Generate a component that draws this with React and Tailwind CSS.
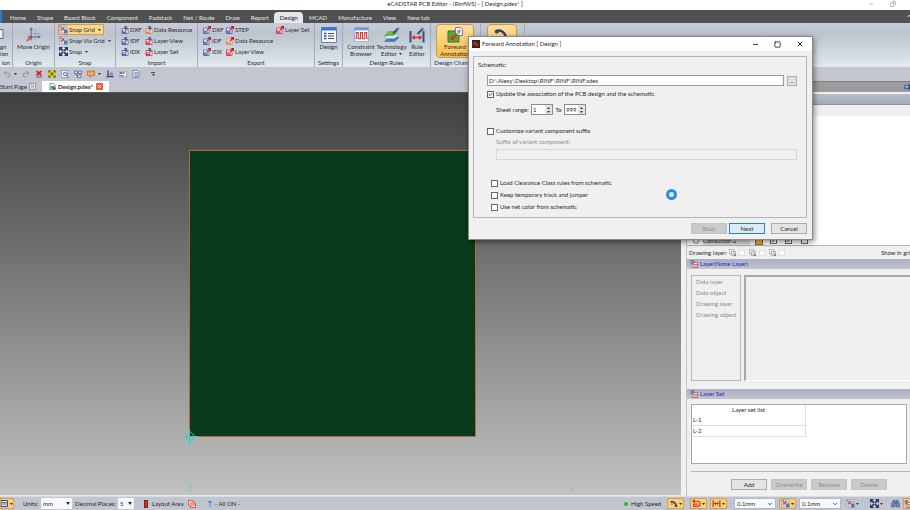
import clsx from "clsx";
import { Check, ChevronDown, ChevronUp, Minus, Square, X, Copy } from "lucide-react";

const menuTabs = [
  "Home",
  "Shape",
  "Board Block",
  "Component",
  "Padstack",
  "Net / Route",
  "Draw",
  "Report",
  "Design",
  "MCAD",
  "Manufacture",
  "View",
  "New tab",
];

const importColumns = [
  [
    { label: "DXF", color: "#6a58b0" },
    { label: "IDF", color: "#4a62ad" },
    { label: "IDX", color: "#4a62ad" },
  ],
  [
    { label: "Data Resource", color: "#e08a3c" },
    { label: "Layer View", color: "#d8324a" },
    { label: "Layer Set", color: "#d8324a" },
  ],
];

const exportColumns = [
  [
    { label: "DXF", color: "#6a58b0" },
    { label: "IDF", color: "#4a62ad" },
    { label: "IDX", color: "#4a62ad" },
  ],
  [
    { label: "STEP", color: "#5a4fb0" },
    { label: "Data Resource", color: "#e08a3c" },
    { label: "Layer View", color: "#d8324a" },
  ],
  [{ label: "Layer Set", color: "#d8324a" }],
];

const layerItems = ["Data layer", "Data object", "Drawing layer", "Drawing object"];

/* ---------- icons ---------- */

const Caret = ({ className }) => (
  <svg viewBox="0 0 6 4" className={clsx("h-[2px] w-[3px] shrink-0", className)}>
    <path d="M0 0h6L3 4z" fill="#333" />
  </svg>
);

const ImportIcon = ({ color }) => (
  <svg viewBox="0 0 16 16" className="size-[8px] shrink-0">
    <path d="M2 5h12v10H2z" fill="#eef0f8" stroke={color} strokeWidth="1.6" />
    <path d="M2 9h8v6H2z" fill={color} />
    <path d="M4 11h4" stroke="#fff" strokeWidth="1.2" />
    <path d="M7 0h5v4h3l-5 5-5-5h2z" fill="#59637c" />
    <path d="M10 11h3v3h-3z" fill="#c8d6f0" />
  </svg>
);

const ExportIcon = ({ color }) => (
  <svg viewBox="0 0 16 16" className="size-[8px] shrink-0">
    <path d="M1 4h11v11H1z" fill="#eef0f8" stroke={color} strokeWidth="1.6" />
    <path d="M1 9h8v6H1z" fill={color} />
    <path d="M3 12h4" stroke="#fff" strokeWidth="1.2" />
    <path d="M8 8l5-5" stroke="#c4242e" strokeWidth="2.6" />
    <path d="M9 0h7v7z" fill="#b3202c" />
  </svg>
);

const SnapGridIcon = () => (
  <svg viewBox="0 0 16 16" className="size-[9px] shrink-0">
    <path d="M1 1h13v13H1zM1 5h13M1 10h13M5 1v13M10 1v13" fill="#f0f1f6" stroke="#8a93a8" strokeWidth="1" />
    <path d="M2 2l6 6M8 8V3M8 8H3" stroke="#c8505a" strokeWidth="1.8" fill="none" />
    <path d="M9 8h6v7H9z" fill="#5c76ac" />
  </svg>
);

const SnapIcon = () => (
  <svg viewBox="0 0 16 16" className="size-[9px] shrink-0">
    <path d="M0 0h7L0 7zM16 0v7L9 0zM0 16V9l7 7zM16 16H9l7-7z" fill="#243a5c" />
    <path d="M3 3l4 4M13 3L9 7M3 13l4-4M13 13L9 9" stroke="#243a5c" strokeWidth="3" />
    <circle cx="8" cy="8" r="2" fill="#7ba6dc" />
  </svg>
);

const OriginIcon = () => (
  <svg viewBox="0 0 32 32" className="size-[15px]">
    <path d="M11 3v25M4 21h24" stroke="#5c7596" strokeWidth="2.4" />
    <path d="M11 0l-4 6h8zM32 21l-6-4v8z" fill="#5c7596" />
    <path d="M20 5v22M8 14h22" stroke="#8a9cb8" strokeWidth="1.6" />
    <path d="M2 30l9-9" stroke="#d8372f" strokeWidth="3" />
    <path d="M13 19v7l-7-7z" fill="#d8372f" />
  </svg>
);

const DesignIcon = () => (
  <svg viewBox="0 0 32 32" className="size-[16px]">
    <path d="M1 1h30v30H1z" fill="#f6f9fd" stroke="#5b82c4" strokeWidth="2" />
    <path d="M1 1h30v6H1z" fill="#3e74c8" />
    <path d="M6 13h5M6 18h5M6 23h5" stroke="#2f5597" strokeWidth="3" />
    <path d="M14 13h12M14 18h12M14 23h12" stroke="#444f66" strokeWidth="2" />
  </svg>
);

const ConstraintIcon = () => (
  <svg viewBox="0 0 32 32" className="size-[15px]">
    <path d="M1 1h30v30H1z" fill="#f3f5fb" stroke="#8ca4cf" strokeWidth="1.5" />
    <path d="M1 1h30v6H1z" fill="#6f97da" />
    <path
      d="M2 24h3V12h4v13h5V12h4v13h5V12h4v12h4"
      fill="none"
      stroke="#e0302c"
      strokeWidth="2.2"
    />
  </svg>
);

const TechnologyIcon = () => (
  <svg viewBox="0 0 32 32" className="size-[16px]">
    <path d="M1 29l9-8h20l-9 8z" fill="#3e7fc6" stroke="#2a63a4" />
    <path d="M1 23l9-8h20l-9 8z" fill="#e4eef5" stroke="#7ba0c4" />
    <path d="M1 17l9-8h18l-8 8z" fill="#6cba3c" stroke="#4a9630" />
    <path d="M18 13L29 2" stroke="#33588f" strokeWidth="4" />
    <path d="M26 1l5 4" stroke="#6f97c8" strokeWidth="3" />
  </svg>
);

const RuleIcon = () => (
  <svg viewBox="0 0 32 32" className="size-[16px]">
    <path d="M3 8v23M29 8v23" stroke="#2e4f8e" strokeWidth="4" />
    <path d="M8 21h16" stroke="#e0302c" strokeWidth="3" />
    <path d="M5 21l7-5v10zM27 21l-7-5v10z" fill="#e0302c" />
    <path d="M17 14L28 3" stroke="#33588f" strokeWidth="4" />
    <path d="M25 1l5 4" stroke="#6f97c8" strokeWidth="3" />
  </svg>
);

const ForwardIcon = () => (
  <svg viewBox="0 0 32 32" className="size-[16px]">
    <path d="M2 8h22v22H2z" fill="#4fae32" stroke="#2c7a22" strokeWidth="2" />
    <path d="M17 1h10l4 4v12H17z" fill="#eef1f6" stroke="#56617a" strokeWidth="1.5" />
    <path d="M20 8h8M20 12h5M24 5v9" stroke="#56617a" strokeWidth="1.4" />
    <path d="M20 14l-9 9" stroke="#d9302c" strokeWidth="4" />
    <path d="M7 26v-9l9 9z" fill="#d9302c" />
  </svg>
);

const CurveIcon = () => (
  <svg viewBox="0 0 32 32" className="size-[16px]">
    <path d="M4 7C14 1 24 10 26 26" fill="none" stroke="#2f4468" strokeWidth="5" strokeLinecap="round" />
    <path d="M20 24h12l-5 7z" fill="#2f4468" />
    <circle cx="6" cy="7" r="4" fill="#2f4468" />
  </svg>
);

const LayerIcon = () => (
  <svg viewBox="0 0 16 16" className="size-[8px] shrink-0">
    <path d="M3 5h12v10H5z" fill="#f4f0f4" stroke="#c0404c" strokeWidth="1.4" />
    <path d="M5 9h10M6 12h9" stroke="#c0404c" strokeWidth="1.4" />
    <circle cx="5" cy="4" r="4" fill="#5b7390" />
    <path d="M3 4h4" stroke="#dfe6ee" strokeWidth="1.2" />
  </svg>
);

const DocIcon = () => (
  <svg viewBox="0 0 16 16" className="size-[7px] shrink-0">
    <path d="M2 1h8l4 4v10H2z" fill="#fff" stroke="#3c6a48" strokeWidth="1.5" />
    <path d="M4 7h8v6H4z" fill="#3c9650" />
    <path d="M9 10h6v5H9z" fill="#3a5a96" />
  </svg>
);

const GrabIcon = () => (
  <svg viewBox="0 0 16 16" className="size-[8px] shrink-0">
    <path d="M1 1h9v9H1z" fill="#f2f2f2" stroke="#8f8f8f" strokeWidth="1.2" />
    <path d="M5 5h8v8H5z" fill="#e2e2e2" stroke="#8f8f8f" strokeWidth="1.2" />
    <path d="M9 8l6 5-3 1-1 2z" fill="#7a7a7a" />
  </svg>
);

const ShapeIcon = () => (
  <svg viewBox="0 0 16 16" className="size-[8px] shrink-0">
    <path d="M1 1h10v5h4v9H5v-4H1z" fill="#fbdcd6" stroke="#d63a30" strokeWidth="1.6" />
    <path d="M4 6h7M5 10h10" stroke="#d63a30" strokeWidth="1.6" />
  </svg>
);

const TrackIcon = () => (
  <svg viewBox="0 0 16 16" className="size-[8px] shrink-0">
    <path d="M1 4c6-2 11 2 12 10" fill="none" stroke="#3b3a35" strokeWidth="3.4" />
    <path d="M9 12h6M2 8h4" stroke="#3b3a35" strokeWidth="1.6" />
  </svg>
);

const ReturnIcon = () => (
  <svg viewBox="0 0 16 16" className="size-[9px] shrink-0">
    <path d="M3 4h7a4 4 0 010 9H3V9h7" fill="none" stroke="#cf3424" strokeWidth="2" />
    <path d="M0 4l5-4v8z" fill="#cf3424" />
  </svg>
);

const GapIcon = () => (
  <svg viewBox="0 0 16 16" className="size-[9px] shrink-0">
    <path d="M2 2v12M14 2v12" stroke="#cf3424" strokeWidth="2.2" />
    <path d="M3 8h10" stroke="#cf3424" strokeWidth="1.6" />
    <path d="M4 8l3-3v6zM12 8L9 5v6z" fill="#cf3424" />
  </svg>
);

const BinocularsIcon = () => (
  <svg viewBox="0 0 16 16" className="size-[9px] shrink-0">
    <path d="M4 2h3v12H1v-5zM12 2H9v12h6v-5z" fill="#6c86b4" stroke="#3a5484" strokeWidth="1" />
    <path d="M6 7h4" stroke="#3a5484" strokeWidth="2" />
  </svg>
);

/* ---------- ribbon ---------- */

const RibbonGroup = ({ label, className, children }) => (
  <section
    className={clsx(
      "flex shrink-0 flex-col overflow-hidden border-r border-[#a3abb9] pt-px",
      className,
    )}
  >
    <div className="flex flex-1">{children}</div>
    {label && <h2 className="text-center leading-[9px]">{label}</h2>}
  </section>
);

const SmallButton = ({ icon, label, caret, active }) => (
  <button
    className={clsx(
      "flex h-[11px] items-center gap-px border pr-[2px]",
      active ? "border-[#c9a04c] bg-[#fbd68a]" : "border-transparent",
    )}
  >
    {icon}
    {label}
    {caret && <Caret className="ml-[2px]" />}
  </button>
);

const LargeButton = ({ icon, lines = [], label, caret, className }) => (
  <button aria-label={label} className={clsx("flex flex-col items-center pt-[2px]", className)}>
    <span className="flex h-[17px] items-center">{icon}</span>
    {lines.map((line, index) => (
      <span key={line} className="flex items-center gap-[2px] leading-[7px]">
        {line}
        {caret && index === lines.length - 1 && <Caret />}
      </span>
    ))}
  </button>
);

const Ribbon = () => (
  <div className="flex h-[44px] shrink-0 overflow-hidden bg-linear-to-b from-[#c9ccd7] via-[#bcc4cf] via-25% to-[#e0eaee]">
    <RibbonGroup label="ion" className="w-[13px]">
      <div className="flex flex-col pt-[4px]">
        <svg viewBox="0 0 10 26" className="h-[13px] w-[5px]">
          <path d="M0 3h6v18H0" fill="#eef3fb" stroke="#4a6ea8" strokeWidth="2" />
        </svg>
        <span className="pt-[2px] leading-[7px]">gn</span>
        <span className="leading-[7px]">ion</span>
      </div>
    </RibbonGroup>
    <RibbonGroup label="Origin" className="w-[42px]">
      <LargeButton icon={<OriginIcon />} lines={["Move Origin"]} className="w-full" />
    </RibbonGroup>
    <RibbonGroup label="Snap" className="w-[61px]">
      <div className="flex flex-col items-start pl-[3px]">
        <SmallButton icon={<SnapGridIcon />} label="Snap Grid" caret active />
        <SmallButton icon={<SnapGridIcon />} label="Snap Via Grid" caret />
        <SmallButton icon={<SnapIcon />} label="Snap" caret />
      </div>
    </RibbonGroup>
    <RibbonGroup label="Import" className="w-[82px]">
      {importColumns.map((column, index) => (
        <div key={index} className={clsx("flex flex-col items-start", index === 0 ? "ml-[4px] w-[24px]" : "w-[50px]")}>
          {column.map((item) => (
            <SmallButton key={item.label} icon={<ImportIcon color={item.color} />} label={item.label} />
          ))}
        </div>
      ))}
    </RibbonGroup>
    <RibbonGroup label="Export" className="w-[117px]">
      {exportColumns.map((column, index) => (
        <div
          key={index}
          className={clsx(
            "flex flex-col items-start",
            index === 0 && "ml-[4px] w-[23px]",
            index === 1 && "w-[50px]",
          )}
        >
          {column.map((item) => (
            <SmallButton key={item.label} icon={<ExportIcon color={item.color} />} label={item.label} />
          ))}
        </div>
      ))}
    </RibbonGroup>
    <RibbonGroup label="Settings" className="w-[28px]">
      <LargeButton icon={<DesignIcon />} lines={["Design"]} className="w-full" />
    </RibbonGroup>
    <RibbonGroup label="Design Rules" className="w-[88px]">
      <LargeButton icon={<ConstraintIcon />} lines={["Constraint", "Browser"]} className="ml-[3px] w-[30px]" />
      <LargeButton icon={<TechnologyIcon />} lines={["Technology", "Editor"]} caret className="w-[31px]" />
      <LargeButton icon={<RuleIcon />} lines={["Rule", "Editor"]} className="w-[20px]" />
    </RibbonGroup>
    <RibbonGroup label="Design Changes" className="w-[50px]">
      <LargeButton
        icon={<ForwardIcon />}
        lines={["Forward", "Annotation"]}
        className="ml-[5px] h-[34px] w-[38px] rounded-sm border border-[#d09a3a] bg-linear-to-b from-[#fddf9c] to-[#fbbf4c]"
      />
    </RibbonGroup>
    <RibbonGroup className="w-[44px]">
      <LargeButton
        icon={<CurveIcon />}
        label="Connect"
        className="ml-[6px] h-[34px] w-[30px] rounded-sm border border-[#d09a3a] bg-linear-to-b from-[#fddf9c] to-[#fbbf4c]"
      />
    </RibbonGroup>
  </div>
);

const quickIcons = [
  {
    name: "Undo",
    art: <path d="M2 6h8a4 4 0 010 8H7M6 2L2 6l4 4" fill="none" stroke="#8b91a0" strokeWidth="2" />,
    caret: true,
  },
  {
    name: "Redo",
    art: <path d="M14 6H6a4 4 0 000 8h3M10 2l4 4-4 4" fill="none" stroke="#8b91a0" strokeWidth="2" />,
  },
  {
    name: "Delete",
    art: (
      <>
        <path d="M3 2l10 9M13 2L3 11" stroke="#e0251f" strokeWidth="3.4" />
        <path d="M2 14h12" stroke="#59627a" strokeWidth="2" />
      </>
    ),
  },
  {
    name: "Fit",
    art: (
      <>
        <path d="M0 0h16v16H0z" fill="#e8c53a" />
        <path d="M1 1h5L1 6zM15 1v5l-5-5zM1 15v-5l5 5zM15 15h-5l5-5z" fill="#253c26" />
        <path d="M5 5h6v6H5z" fill="#3c8a34" />
      </>
    ),
  },
  {
    name: "Zoom area",
    art: (
      <>
        <path d="M1 1h12v14H1z" fill="#f5f8fc" stroke="#7890b4" strokeWidth="1.4" />
        <circle cx="8" cy="8" r="3.5" fill="#cfe3f6" stroke="#4d6c9c" strokeWidth="1.6" />
        <path d="M11 11l4 4" stroke="#4d6c9c" strokeWidth="2" />
      </>
    ),
  },
  {
    name: "Search",
    art: (
      <>
        <path d="M1 2h6v5H1zM9 2h6v5H9zM7 10h7v5H7z" fill="#e5ebf6" stroke="#43609a" strokeWidth="1.5" />
        <path d="M3 8l4 5M12 7v3" stroke="#b43a44" strokeWidth="1.8" />
      </>
    ),
  },
  {
    name: "Comment",
    art: <path d="M1 2h14v9H9l-3 4v-4H1z" fill="#f3a94e" stroke="#b86c28" strokeWidth="1.6" />,
    caret: true,
  },
  {
    name: "Axis",
    art: (
      <>
        <path d="M4 1v12h11" fill="none" stroke="#27408a" strokeWidth="2.6" />
        <path d="M8 5h6v5H8z" fill="#6c8ed0" />
        <path d="M1 15l4-4" stroke="#d22f2c" strokeWidth="2.6" />
      </>
    ),
  },
  {
    name: "Grid",
    art: (
      <>
        <path d="M1 3h14v11H1z" fill="#f2f5fa" stroke="#8190ac" strokeWidth="1.2" />
        <path d="M2 4h4v4H2z" fill="#dd4a44" />
        <path d="M7 4h4v4H7z" fill="#4b9a52" />
        <path d="M2 10h8v3H2z" fill="#5f8bd0" />
      </>
    ),
  },
  {
    name: "Report",
    art: (
      <>
        <path d="M2 1h9l3 3v11H2z" fill="#eef3fa" stroke="#5674a8" strokeWidth="1.5" />
        <path d="M6 5h5v8H6z" fill="#b9cce8" stroke="#3e5c92" />
      </>
    ),
  },
];

const QuickBar = () => (
  <div className="flex h-[14px] shrink-0 items-center gap-[5px] bg-[#c2c6d1] pl-[3px]">
    {quickIcons.map((item) => (
      <button key={item.name} aria-label={item.name} className="flex items-center gap-[3px]">
        <svg viewBox="0 0 16 16" className="size-[8px]">
          {item.art}
        </svg>
        {item.caret && <Caret />}
      </button>
    ))}
    <button aria-label="Customize" className="ml-[6px] flex flex-col items-center gap-px">
      <span className="h-px w-[4px] bg-[#444]" />
      <Caret />
    </button>
  </div>
);

/* ---------- form parts ---------- */

const CheckBox = ({ id, label, checked, className }) => (
  <div className={clsx("flex items-center gap-[2px]", className)}>
    <span className="relative flex">
      <input
        id={id}
        type="checkbox"
        defaultChecked={checked}
        aria-label={label ? undefined : id}
        className="peer size-[7px] appearance-none border border-[#666] bg-white"
      />
      <Check
        strokeWidth={4}
        className="pointer-events-none absolute inset-px hidden size-[5px] text-[#222] peer-checked:block"
      />
    </span>
    {label && <label htmlFor={id}>{label}</label>}
  </div>
);

const Spin = ({ id, value }) => (
  <span className="flex h-[11px] w-[22px] border border-[#8c8c8c] bg-white">
    <input
      id={id}
      aria-label={id}
      defaultValue={value}
      className="w-[13px] min-w-0 pl-px text-[#222] outline-none"
    />
    <span className="flex flex-1 flex-col items-center justify-center gap-[2px] bg-[#e2e2e2]">
      <button aria-label="Up">
        <Caret className="block rotate-180" />
      </button>
      <button aria-label="Down">
        <Caret className="block" />
      </button>
    </span>
  </span>
);

const PushButton = ({ label, disabled, primary }) => (
  <button
    disabled={disabled}
    className={clsx(
      "h-[11px] w-[36px] border leading-[9px]",
      primary && "border-[#2f7fc8] bg-[#dcebf8]",
      disabled && "border-[#c4c4c4] bg-[#cacaca] text-[#8e8e8e]",
      !primary && !disabled && "border-[#adadad] bg-[#e4e4e4]",
    )}
  >
    {label}
  </button>
);

const DropDown = ({ label, value, className, chevron }) => (
  <span className={clsx("relative flex h-[11px] items-center bg-[#f7f8fa]", className)}>
    <select aria-label={label} className="w-full appearance-none pl-[2px] outline-none">
      <option>{value}</option>
    </select>
    {chevron ? (
      <ChevronDown className="pointer-events-none absolute right-[2px] size-[6px]" strokeWidth={3} />
    ) : (
      <svg viewBox="0 0 6 5" className="pointer-events-none absolute right-[2px] h-[3px] w-[4px]">
        <path d="M0 0h6L3 5z" fill="#222" />
      </svg>
    )}
  </span>
);

/* ---------- dialog ---------- */

const ForwardAnnotationDialog = () => (
  <div
    role="dialog"
    aria-labelledby="dialog-title"
    className="absolute top-[36px] right-[97px] flex w-[345px] flex-col border border-[#8a8a8a] bg-[#f0f0f0] shadow-[1px_2px_6px_rgba(0,0,0,0.5)]"
  >
    <div className="flex h-[14px] items-center bg-white pr-[8px] pl-[3px]">
      <svg viewBox="0 0 16 16" className="mr-[2px] size-[8px]">
        <path d="M0 0h16v16H0z" fill="#4a1d1c" />
        <path d="M3 11V5h5v6h5M3 8h10" fill="none" stroke="#b8503f" strokeWidth="1.5" />
      </svg>
      <h1 id="dialog-title" className="flex-1">
        Forward Annotation [ Design ]
      </h1>
      <div className="flex items-center gap-[15px]">
        <button aria-label="Minimize">
          <Minus className="size-[7px]" strokeWidth={3} />
        </button>
        <button aria-label="Maximize">
          <Square className="size-[7px]" strokeWidth={3} />
        </button>
        <button aria-label="Close">
          <X className="size-[8px]" strokeWidth={3} />
        </button>
      </div>
    </div>

    <div className="mt-[5px] mr-[5px] ml-[4px] flex h-[162px] flex-col border border-[#b4b4b4] pr-[9px] pl-[4px]">
      <label htmlFor="schematic" className="mt-[4px] leading-[8px]">
        Schematic:
      </label>
      <div className="mt-[6px] ml-[9px] flex items-center gap-[3px]">
        <input
          id="schematic"
          defaultValue="D:\Alexy\Desktop\RINF\RINF\RINF.sdes"
          className="h-[11px] min-w-0 flex-1 border border-[#9a9a9a] bg-white pl-px outline-none"
        />
        <button aria-label="Browse" className="h-[10px] w-[10px] border border-[#adadad] bg-[#e1e1e1] leading-[6px]">
          ...
        </button>
      </div>
      <CheckBox
        id="update"
        label="Update the association of the PCB design and the schematic"
        checked
        className="mt-[4px] ml-[9px] h-[8px]"
      />
      <div className="mt-[6px] ml-[18px] flex items-center">
        <label htmlFor="Sheet from" className="w-[35px]">
          Sheet range:
        </label>
        <Spin id="Sheet from" value="1" />
        <label htmlFor="Sheet to" className="w-[11px] text-center">
          To
        </label>
        <Spin id="Sheet to" value="999" />
      </div>
      <CheckBox
        id="customize"
        label="Customize variant component suffix"
        className="mt-[12px] ml-[9px] h-[8px]"
      />
      <label htmlFor="suffix" className="mt-[3px] ml-[18px] leading-[8px] text-[#8c8c8c]">
        Suffix of variant component:
      </label>
      <input id="suffix" disabled className="mt-[3px] ml-[18px] h-[11px] border border-[#d6d6d6] bg-[#f0f0f0]" />
      <div className="mt-[19px] ml-[13px] flex flex-col gap-[4px]">
        <CheckBox id="load" label="Load Clearance Class rules from schematic" className="h-[8px]" />
        <CheckBox id="keep" label="Keep temporary track and jumper" className="h-[8px]" />
        <CheckBox id="netcolor" label="Use net color from schematic" className="h-[8px]" />
      </div>
    </div>

    <div className="flex justify-end gap-[2px] py-[5px] pr-[5px]">
      <PushButton label="Back" disabled />
      <PushButton label="Next" primary />
      <span className="ml-[4px] flex">
        <PushButton label="Cancel" />
      </span>
    </div>

    <span className="absolute top-[152px] left-[197px] size-[11px] rounded-full border-[3px] border-[#2f8be0] bg-[#d8ebfb]" />
  </div>
);

/* ---------- work area ---------- */

const Canvas = () => (
  <div className="relative min-h-0 flex-1 overflow-hidden border-b border-[#e8e8e8] bg-linear-to-b from-[#404040] to-[#c2c2c2]">
    <svg className="absolute inset-0 size-full">
      <rect x="189.5" y="57.5" width="286" height="286" fill="#093a1b" stroke="#b0683c" />
      <path d="M182 343.5h16M189.5 336v17M185 343.5l5-5 5 5-5 5z" fill="none" stroke="#3fc8c8" />
      <path d="M190 391v8M188 392h4M572 393v6M570 396h4" stroke="#63c8c8" opacity="0.7" />
    </svg>
  </div>
);

const PanelHeader = ({ label }) => (
  <div className="flex h-[10px] shrink-0 items-center gap-[2px] bg-linear-to-b from-[#a9b0be] to-[#c0c5cf] pl-[3px] text-[#1c1cd0]">
    <LayerIcon />
    <h2>{label}</h2>
  </div>
);

const SidePanel = () => (
  <aside className="flex w-[229px] shrink-0 flex-col bg-[#f0f0f0]">
    <div className="flex h-[11px] shrink-0 items-center justify-end border-t border-[#808080] bg-[#9c9c9c]">
      <svg viewBox="0 0 12 12" className="h-[6px] w-[6px]">
        <path d="M1 2h4v8H1zM7 1h5v10H7z" fill="#2746a8" />
        <path d="M3 4h6v3H3z" fill="#bcd0f2" />
      </svg>
    </div>
    <div className="mt-[2px] ml-[5px] flex min-h-0 flex-1 flex-col overflow-hidden border-l border-[#c4c4c4] pb-px">
      <div className="h-[11px] shrink-0 border-b border-[#8f959f] bg-linear-to-b from-[#b9bec9] to-[#a4abb8]" />
      <div className="mt-[11px] flex h-[130px] shrink-0 flex-col justify-end border-b border-[#b5b5b5] bg-white">
        <div className="flex h-[9px] items-center">
          <span className="ml-[6px] size-[6px] rounded-full border border-[#888]" />
          <span className="ml-[4px] w-[47px] bg-[#dcdcdc] leading-[8px]">Conductor-2</span>
          <span className="ml-[5px] size-[8px] border border-[#8a6a2a] bg-[#f0b440]" />
          <CheckBox id="conductor-visible" checked className="ml-[7px]" />
          <CheckBox id="conductor-select" checked className="ml-[8px]" />
          <CheckBox id="conductor-lock" className="ml-[9px]" />
        </div>
      </div>
      <div className="flex h-[13px] shrink-0 items-center gap-[4px] pl-[2px] whitespace-nowrap">
        <span className="w-[36px]">Drawing layer:</span>
        {["grab", "show", "edit"].map((name) => (
          <span key={name} className="flex items-center gap-[2px]">
            <GrabIcon />
            <input
              type="checkbox"
              aria-label={name}
              className="size-[6px] appearance-none border border-[#dedede] bg-white"
            />
          </span>
        ))}
        <span className="ml-auto">Show in gri</span>
      </div>
      <PanelHeader label="Layer(None Layer)" />
      <div className="mt-[6px] flex h-[106px] shrink-0 gap-[3px] pl-[4px]">
        <ul className="w-[50px] border border-[#b8b8b8] pl-[4px] leading-[11px] text-[#8a8a8a]">
          {layerItems.map((item) => (
            <li key={item}>{item}</li>
          ))}
        </ul>
        <div className="flex-1 border-t-2 border-b border-l-2 border-t-[#a8a8a8] border-b-white border-l-[#a8a8a8]" />
      </div>
      <div className="mt-[8px] flex flex-col">
        <PanelHeader label="Layer Set" />
      </div>
      <div className="mt-[5px] mr-[3px] ml-[4px] h-[60px] shrink-0 border border-[#a8a8a8] bg-white">
        <table className="w-[114px] border-collapse leading-[10px]">
          <thead>
            <tr>
              <th className="border-r border-[#dedede] p-0 font-normal">Layer set list</th>
            </tr>
          </thead>
          <tbody>
            <tr>
              <td className="border-r border-b border-[#dedede] py-0 pr-0 pl-px">L-1</td>
            </tr>
            <tr>
              <td className="border-r border-b border-[#dedede] py-0 pr-0 pl-px">L-2</td>
            </tr>
          </tbody>
        </table>
      </div>
      <div className="mt-[7px] ml-[4px] flex justify-end gap-[4px] border-t border-[#b8b8b8] pt-[7px] pr-[23px]">
        <PushButton label="Add" />
        <PushButton label="Overwrite" disabled />
        <PushButton label="Rename" disabled />
        <PushButton label="Delete" disabled />
      </div>
    </div>
  </aside>
);

const ToolToggle = ({ label, active, children }) => (
  <button
    aria-label={label}
    className={clsx(
      "flex h-[11px] w-[17px] shrink-0 items-center justify-center gap-px border",
      active ? "border-[#d3a24a] bg-[#fbcf78]" : "border-transparent",
    )}
  >
    {children}
    <Caret />
  </button>
);

const StatusBar = () => (
  <footer className="flex h-[14px] shrink-0 items-center overflow-hidden border-t border-[#d8dbe3] bg-[#c0c5d0] whitespace-nowrap">
    <button aria-label="Console" className="flex h-[11px] w-[14px] items-center gap-[2px] border border-[#d3a24a] bg-[#fbcf78]">
      <svg viewBox="0 0 14 14" className="size-[7px]">
        <path d="M0 1h13v12H0z" fill="#dfe8f5" stroke="#2f4a7e" strokeWidth="2" />
        <path d="M2 5h9M2 8h9" stroke="#2f4a7e" strokeWidth="1.5" />
      </svg>
      <Caret />
    </button>
    <span className="ml-[9px] w-[18px]">Units:</span>
    <DropDown label="Units" value="mm" className="w-[31px]" />
    <span className="ml-[3px] w-[43px]">Decimal Places:</span>
    <DropDown label="Decimal Places" value="5" className="w-[16px]" />
    <span className="ml-[10px] h-[8px] w-[4px] border border-[#7c2018] bg-[#d83428]" />
    <span className="ml-[4px] w-[36px]">Layout Area</span>
    <ShapeIcon />
    <svg viewBox="0 0 12 16" className="ml-[11px] h-[8px] w-[6px]">
      <path d="M1 2h10L7 7v8H5V7z" fill="#4a8fdc" />
    </svg>
    <span className="ml-[2px]">- All ON -</span>

    <span className="ml-auto size-[4px] rounded-full bg-[#25b52c]" />
    <span className="ml-[3px] w-[36px]">High Speed</span>
    <div className="flex items-center gap-[3px]">
      <ToolToggle label="Track" active>
        <TrackIcon />
      </ToolToggle>
      <span className="ml-[3px] flex gap-[3px]">
        <ToolToggle label="Return" active>
          <ReturnIcon />
        </ToolToggle>
        <ToolToggle label="Gap" active>
          <GapIcon />
        </ToolToggle>
      </span>
      <DropDown label="Grid" value="0.1mm" chevron className="ml-[4px] w-[42px] border border-[#b4b8c2]" />
      <ToolToggle label="Snap grid" active>
        <SnapGridIcon />
      </ToolToggle>
      <DropDown label="Via grid" value="0.1mm" chevron className="w-[42px] border border-[#b4b8c2]" />
      <ToolToggle label="Snap via grid">
        <SnapGridIcon />
      </ToolToggle>
      <span className="ml-[4px] flex">
        <ToolToggle label="Snap">
          <SnapIcon />
        </ToolToggle>
      </span>
    </div>
    <button aria-label="Find" className="ml-[6px]">
      <BinocularsIcon />
    </button>
    <button aria-label="Layers" className="ml-[3px] h-[11px] w-[7px] overflow-hidden border border-r-0 border-[#d3a24a] bg-[#fbcf78]">
      <LayerIcon />
    </button>
  </footer>
);

const App = () => {
  return (
    <div className="relative flex h-screen flex-col overflow-hidden bg-[#c2c6d1] font-[Lato,'Open_Sans',sans-serif] text-[6px] leading-[8px] whitespace-nowrap text-[#2a2a2a]">
      <header className="relative flex h-[10px] shrink-0 items-start justify-center bg-white">
        <h1 className="leading-[7px]">eCADSTAR PCB Editor - (RinfWS) - [ Design.pdes* ]</h1>
        <div className="absolute top-px right-[14px] flex gap-[16px] text-[#777]">
          <button aria-label="Minimize window">
            <Minus className="size-[6px]" strokeWidth={2} />
          </button>
          <button aria-label="Restore window">
            <Copy className="size-[6px] -scale-x-100" strokeWidth={2} />
          </button>
        </div>
      </header>

      <nav className="flex h-[13px] shrink-0 items-end bg-[#515151] text-[#e6e6e6]">
        <span className="mr-[2px] h-full w-[2px] bg-[#2a7bd0]" />
        {menuTabs.map((tab) => (
          <button
            key={tab}
            className={clsx(
              "h-[11px] shrink-0 pr-[5px] pl-[6px]",
              tab === "Design" && "rounded-t-sm bg-[#e4e7ed] text-[#222]",
            )}
          >
            {tab}
          </button>
        ))}
        <ChevronUp className="mr-[-2px] mb-[4px] ml-auto size-[6px]" strokeWidth={4} />
      </nav>

      <Ribbon />
      <QuickBar />

      <div className="flex min-h-0 flex-1">
        <main className="flex min-w-0 flex-1 flex-col">
          <div className="flex h-[12px] shrink-0 items-end border-b border-[#555]">
            <div className="flex h-[11px] w-[42px] items-center gap-[3px]">
              <span className="w-[26px]">Start Page</span>
              <button aria-label="Close start page" className="border border-[#999] bg-[#e2e2e2] text-[#777]">
                <X className="size-[5px]" strokeWidth={3} />
              </button>
            </div>
            <div className="flex h-[11px] w-[67px] items-center gap-[2px] bg-white pl-[7px] font-bold">
              <DocIcon />
              <span className="w-[36px]">Design.pdes*</span>
              <button aria-label="Close design" className="bg-[#e0683f] p-px text-white">
                <X className="size-[5px]" strokeWidth={4} />
              </button>
            </div>
          </div>
          <Canvas />
        </main>
        <SidePanel />
      </div>

      <StatusBar />
      <ForwardAnnotationDialog />
    </div>
  );
};

export default App;
